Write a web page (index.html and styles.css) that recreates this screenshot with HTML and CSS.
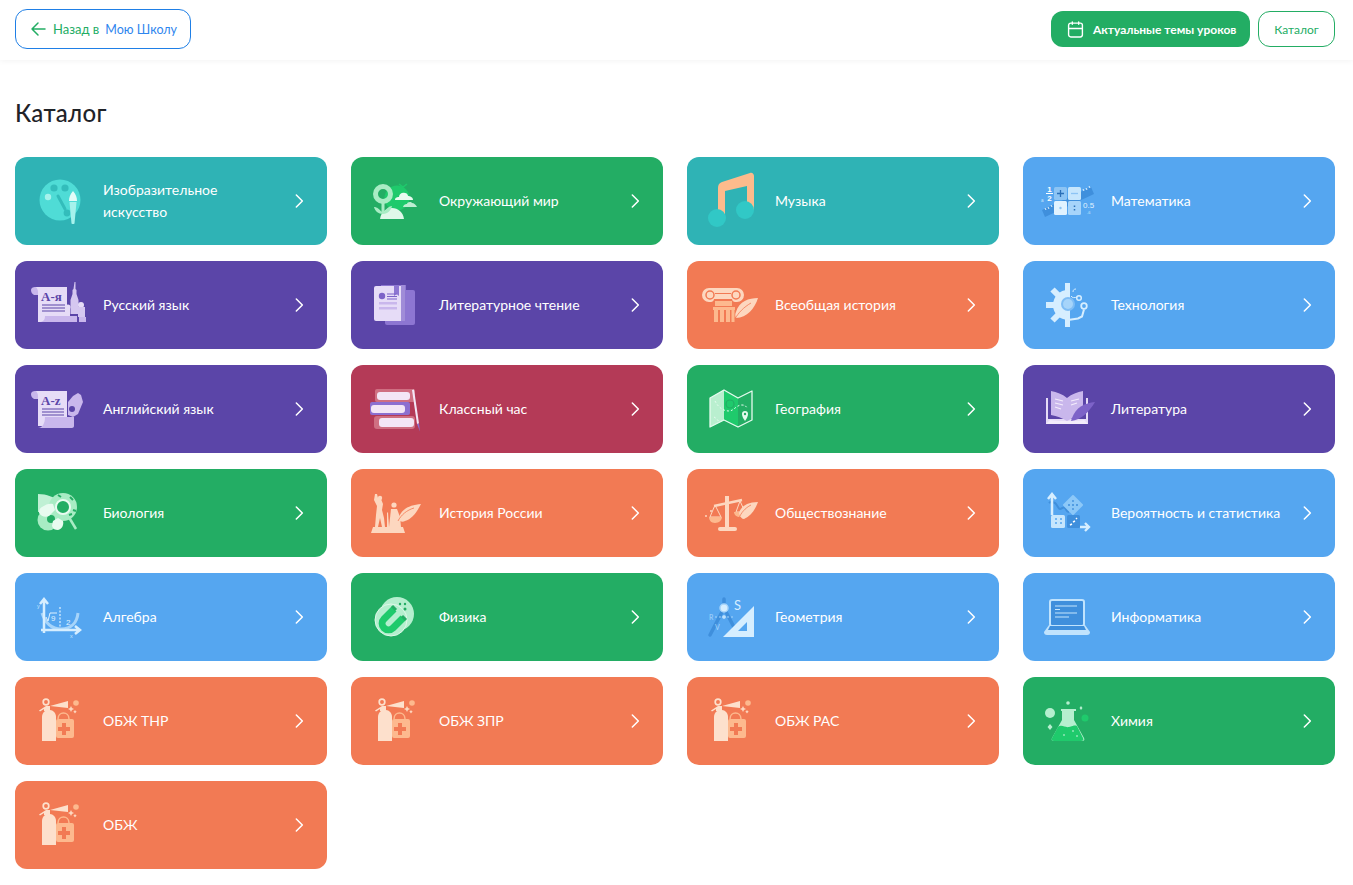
FILE: index.html
```html
<!DOCTYPE html>
<html lang="ru">

<head>
    <meta charset="UTF-8">
    <title>Каталог</title>
    <link rel="stylesheet" href="styles.css">
</head>

<body>
    <!-- иконки предметов, координаты как в карточке (88x88) -->
    <svg class="icon-sprite" xmlns="http://www.w3.org/2000/svg">
        <defs>
            <clipPath id="gear-half"><rect x="20" y="20" width="27" height="50"/></clipPath>
        </defs>
        <symbol id="i-art" viewBox="0 0 88 88">
            <circle cx="45" cy="43" r="20.500" fill="#4fdcd6"/>
            <circle cx="39" cy="31" r="3.600" fill="#33bdbb"/>
            <circle cx="50" cy="31" r="3.600" fill="#33bdbb"/>
            <circle cx="33" cy="40" r="3.200" fill="#a6f2ec"/>
            <circle cx="52" cy="56" r="3.400" fill="#33bdbb"/>
            <path d="M43 39l7 13" stroke="#33bdbb" stroke-width="3" stroke-linecap="round"/>
            <path d="M58 34c-3 3-4 7-4 10h8c0-3-1-7-4-10z" fill="#e2fcf8"/>
            <path d="M54.500 45h7l-2 21.500c-1 .7-2 .7-3 0z" fill="#a6f2ec"/>
        </symbol>
        <symbol id="i-world" viewBox="0 0 88 88">
            <circle cx="46" cy="41" r="12.500" fill="#1fca6c"/>
            <path d="M29 62c1-7 6-11 12-11s11 4 12 11z" fill="#e0f8ea"/>
            <path d="M32 46v10" stroke="#a8ecc4" stroke-width="3"/>
            <path d="M32 56c-4-4-6-6-9-6 1 4 4 7 9 7zM32 56c3-4 6-7 9-7-1 4-4 8-9 8z" fill="#a8ecc4"/>
            <circle cx="32" cy="37" r="7.500" fill="none" stroke="#a8ecc4" stroke-width="5"/>
            <path d="M44 43c0-3 3-3 4-3 0-3 3-5 6-4 2 0 3 2 3 3 2 0 5 1 5 4z" fill="#e8fbf0"/>
            <path d="M52 50c1-3 3-3 4-3 0-2 4-3 5-1 2 0 4 2 5 4z" fill="#bdeed2"/>
            <path d="M48 27l4 3 4-3M44 47l3 2 3-2" fill="none" stroke="#1fca6c" stroke-width="1.500"/>
        </symbol>
        <symbol id="i-music" viewBox="0 0 88 88">
            <path d="M31 60V31c0-3 1-5 4-6l28-9c2-1 4 1 4 3v34h-7V29l-22 5v26z" fill="#fdbb8c"/>
            <circle cx="30" cy="61" r="9" fill="#31c8c6"/>
            <circle cx="58" cy="53" r="9" fill="#31c8c6"/>
        </symbol>
        <symbol id="i-lit-read" viewBox="0 0 88 88">
            <rect x="34" y="29" width="30" height="35" rx="2" fill="#8d76d2"/>
            <path d="M38 29h17v-5H30v6z" fill="#8d76d2"/>
            <rect x="23" y="25" width="31" height="35" rx="2" fill="#e6dcf7"/>
            <rect x="50" y="24" width="4" height="36" fill="#a08cd8"/>
            <path d="M43 25h5v10l-2.500-2-2.500 2z" fill="#8d76d2"/>
            <circle cx="31" cy="35" r="3.200" fill="#7d63c8"/>
            <path d="M36 33h10M36 35.500h10M36 38h10" stroke="#7d63c8"/>
            <rect x="28" y="41" width="18" height="2.500" fill="#c9b7ec"/>
            <rect x="28" y="46" width="18" height="2.500" fill="#c9b7ec"/>
        </symbol>
        <symbol id="i-column" viewBox="0 0 88 88">
            <path d="M22 27h28a7 7 0 0 1 0 14h-2c-1 0-3-1-3-3H27c0 2-2 3-3 3h-2a7 7 0 0 1 0-14z" fill="#fdd7bf"/>
            <circle cx="23" cy="34" r="4" fill="none" stroke="#f27a54" stroke-width="1.500"/>
            <circle cx="49" cy="34" r="4" fill="none" stroke="#f27a54" stroke-width="1.500"/>
            <path d="M28 32.500h16" stroke="#f27a54"/>
            <rect x="28" y="40" width="17" height="5" fill="#fdb98e"/>
            <rect x="26" y="46" width="22" height="3" fill="#fdb98e"/>
            <path d="M27 49h4v12h-4zM33 49h4v12h-4zM39 49h4v12h-4zM44.500 49h3v12h-3z" fill="#fdb98e"/>
            <path d="M71 37c-9 0-19 3-22 14-1 2-1 4 0 6 11 0 19-10 22-20z" fill="#fdd7bf"/>
            <path d="M48 58c3-6 9-12 16-16" fill="none" stroke="#f27a54" stroke-width=".8"/>
        </symbol>
        <symbol id="i-tech" viewBox="0 0 88 88">
            <g clip-path="url(#gear-half)">
                <circle cx="45" cy="44" r="15" fill="#d6eeff"/>
                <path d="M45 22v44M23 44h44M29.500 28.500l31 31M29.500 59.500l31-31" stroke="#d6eeff" stroke-width="6"/>
            </g>
            <circle cx="45" cy="43" r="7" fill="#7fbdf5"/>
            <circle cx="45" cy="43" r="5" fill="#a6d4fa"/>
            <path d="M45 59l10-1.500 4-2 2-7" fill="none" stroke="#d6eeff" stroke-width="2"/>
            <circle cx="61" cy="45" r="2.800" fill="none" stroke="#d6eeff" stroke-width="1.800"/>
            <circle cx="56" cy="37" r="2.300" fill="none" stroke="#d6eeff" stroke-width="1.500"/>
            <path d="M48 35c1 2 4 2 6 1M50 31c0-2 1-3 3-3" fill="none" stroke="#d6eeff"/>
        </symbol>
        <symbol id="i-books" viewBox="0 0 88 88">
            <rect x="24" y="24" width="40" height="13" rx="2" fill="#cf6f82"/>
            <rect x="26" y="27" width="33" height="8" rx="3" fill="#f3e6f6"/>
            <rect x="19" y="37" width="40" height="13" rx="2" fill="#8c6fd0"/>
            <rect x="20" y="40" width="34" height="8" rx="3" fill="#f3e6f6"/>
            <rect x="23" y="51" width="41" height="13" rx="3" fill="#cf6f82"/>
            <rect x="28" y="53" width="35" height="9" rx="3" fill="#f3e6f6"/>
            <path d="M61 25l2-.5 5 34-2 .5z" fill="#f3e6f6"/>
            <path d="M66 59l2-.5 1 8z" fill="#8c6fd0"/>
        </symbol>
        <symbol id="i-map" viewBox="0 0 88 88">
            <path d="M23 33l14-8v30l-14 7z" fill="#b9efcf"/>
            <path d="M37 25l14 8v29l-14-7z" fill="#1fca6c"/>
            <path d="M23 33l14-8 14 8 14-7v29l-14 7-14-7-14 7z" fill="none" stroke="#e6fbef" stroke-width="1.300" stroke-linejoin="round"/>
            <circle cx="43" cy="39" r="4" fill="none" stroke="#23ad64" stroke-width="1.200"/>
            <path d="M28 36c3 6 8 10 14 10 5 0 7-6 13-6 3 0 4 1 5 3M27 52c2 1 4 3 5 5" fill="none" stroke="#e6fbef" stroke-dasharray="2 2"/>
            <path d="M58 56c-2-3-3-5-3-7a3 3 0 0 1 6 0c0 2-1 4-3 7z" fill="#e6fbef"/>
            <circle cx="58" cy="49" r="1.200" fill="#23ad64"/>
        </symbol>
        <symbol id="i-lit" viewBox="0 0 88 88">
            <path d="M23 33h42v26H23z" fill="#e6dcf7"/>
            <path d="M25 33h38v21H25z" fill="#5b45a8"/>
            <path d="M28 26c6 1 11 3 16 7v23c-5-3-10-5-16-6z" fill="#c9b7ec"/>
            <path d="M60 26c-6 1-11 3-16 7v23c5-3 10-5 16-6z" fill="#c9b7ec"/>
            <path d="M44 56c-5 0-13 0-17-1l-4 4h42l-4-4c-4 1-12 1-17 1z" fill="#f3ecfb"/>
            <path d="M32 34l8 2M32 38l8 2M32 42l6 2M48 36l8-2M48 40l6-2" stroke="#f3ecfb" stroke-width="1.200"/>
            <path d="M72 37c-10 1-19 5-23 16l-1 3c10-1 18-9 24-19z" fill="#7d63c8"/>
        </symbol>
        <symbol id="i-bio" viewBox="0 0 88 88">
            <path d="M23 25c9 0 16 3 22 8l-8 9-14 1z" fill="#bff0d4"/>
            <circle cx="48" cy="38" r="14" fill="#a8ecc4"/>
            <circle cx="33" cy="51" r="10.500" fill="#a8ecc4"/>
            <circle cx="36" cy="50" r="4" fill="#23ad64"/>
            <path d="M27 38c4-3 8-4 11-3l2 6-6 6c-4 2-8 0-10-3 0-3 1-5 3-6z" fill="#e8fbf0"/>
            <path d="M38 52l5-3 5 3c1 4-1 8-5 9-3 0-5-1-6-4z" fill="#e8fbf0"/>
            <path d="M52 45l9 15" stroke="#a8ecc4" stroke-width="2.500"/>
            <circle cx="48" cy="38" r="7" fill="#23ad64" stroke="#e8fbf0" stroke-width="2"/>
            <path d="M43 26l3 2M55 28l3 3M58 41l3 1M54 46l3-1" stroke="#23ad64" stroke-width="2"/>
        </symbol>
        <symbol id="i-rus-hist" viewBox="0 0 88 88">
            <path d="M22 58h30l2 6H20z" fill="#fdd7bf"/>
            <path d="M24 25h2l1 4 3 1 2 5-1 6 2 8 1 9h-3l-2-9-2 9h-3l1-12 1-9-3-6z" fill="#fdd7bf"/>
            <circle cx="29" cy="29" r="2.200" fill="#fdd7bf"/>
            <path d="M36 44l1-1 1 15h-2z" fill="#fdd7bf"/>
            <circle cx="43" cy="36" r="2.600" fill="#fdd7bf"/>
            <path d="M40 40h6l3 8 1 10H38l1-9z" fill="#fdd7bf"/>
            <path d="M70 35c-10 1-19 4-22 13l-1 3c3 2 5 2 7 1 7-2 12-9 16-17z" fill="#fdd7bf"/>
            <path d="M47 52c3-6 9-11 16-13" fill="none" stroke="#f27a54" stroke-width=".8"/>
        </symbol>
        <symbol id="i-scales" viewBox="0 0 88 88">
            <rect x="38" y="27" width="4" height="31" fill="#fdd7bf"/>
            <rect x="31" y="58" width="19" height="4" rx="2" fill="#fdd7bf"/>
            <path d="M27 37l28-6" stroke="#fdd7bf" stroke-width="2.500"/>
            <path d="M28 36l-5 12h11zM53 32l-4 11h9z" fill="none" stroke="#fdd7bf"/>
            <path d="M22 48h13c0 3-3 6-7 6s-6-3-6-6zM47 43h11c0 3-2 5-5 5s-6-2-6-5z" fill="#fdb98e"/>
            <path d="M71 33c-10 0-17 4-19 11 1 4 3 6 5 6 7-3 11-9 14-17z" fill="#fdd7bf"/>
            <path d="M52 49c2-5 6-10 12-13" fill="none" stroke="#f27a54" stroke-width=".8"/>
            <circle cx="19" cy="47" r="1" fill="#fdd7bf"/>
            <circle cx="24" cy="42" r="1" fill="#fdd7bf"/>
        </symbol>
        <symbol id="i-prob" viewBox="0 0 88 88">
            <path d="M26 34c2-2 4-1 6 0s3 6 5 6 3-3 5-1 1 4 4 4" fill="none" stroke="#3f8fdc" stroke-width="2"/>
            <path d="M29 46V27M25 30l4-5 4 5" fill="none" stroke="#d6eeff" stroke-width="2.500"/>
            <path d="M57 58h9M62 54l4 4-4 4" fill="none" stroke="#d6eeff" stroke-width="2.300"/>
            <rect x="28" y="46" width="14" height="13" rx="1.500" fill="#c6e6fd"/>
            <rect x="44" y="46" width="13" height="13" rx="1.500" fill="#3f8fdc"/>
            <path d="M50 27l9 9-9 9-9-9z" fill="#8cc8f8" stroke="#8cc8f8" stroke-width="2" stroke-linejoin="round"/>
            <path d="M50 31v2M50 39v2M45 36h2M53 36h2M49 36h2" stroke="#3f8fdc" stroke-width="1.300"/>
            <path d="M32 50h2M37 50h2M32 54h2M37 54h2" stroke="#55a6f0" stroke-width="1.500"/>
            <path d="M47 56l2-1M50 53l2-1M53 50l1-1" stroke="#fff" stroke-width="1.500"/>
        </symbol>
        <symbol id="i-phys" viewBox="0 0 88 88">
            <circle cx="46" cy="41" r="17" fill="#b5efcf"/>
            <circle cx="40" cy="47" r="16" fill="#b5efcf" stroke="#e0f8ea"/>
            <path d="M43 36L33 46a6 6 0 0 0 9 9l10-10" fill="none" stroke="#1fca6c" stroke-width="7"/>
            <path d="M41 33l4 4M51 43l4 4" stroke="#23ad64" stroke-width="3"/>
            <circle cx="49" cy="31" r="1.200" fill="#23ad64"/>
            <circle cx="54" cy="31" r="1.200" fill="#23ad64"/>
            <circle cx="54" cy="36" r="1.500" fill="#23ad64"/>
        </symbol>
        <symbol id="i-info" viewBox="0 0 88 88">
            <rect x="27" y="27" width="34" height="26" rx="2" fill="#3f8fdc" stroke="#c0e3fd" stroke-width="2"/>
            <path d="M32 33h22M32 36.500h5M32 40h22M32 44h14" stroke="#c6e6fd"/>
            <path d="M26 52h36l5 7c0 2-1 3-3 3H24c-2 0-3-1-3-3z" fill="#c0e3fd"/>
            <path d="M27 53h34l2 4H25z" fill="#3f8fdc"/>
        </symbol>
        <symbol id="i-safe" viewBox="0 0 88 88">
            <circle cx="61" cy="26" r="2.800" fill="#fdb98e"/>
            <path d="M56 29l1 2 2 1-2 1-1 2-1-2-2-1 2-1zM60 33l.7 1 1 .7-1 .7-.7 1-.7-1-1-.7 1-.7z" fill="#fdd7bf"/>
            <rect x="41" y="42" width="18" height="19" rx="2" fill="#fdb98e"/>
            <path d="M43 42c0-8 11-8 11 0" fill="none" stroke="#fdb98e" stroke-width="1.500"/>
            <path d="M47 46h4v4h4v4h-4v4h-4v-4h-4v-4h4z" fill="#f27a54"/>
            <path d="M27 64V40c0-4 3-7 6-7h2c3 0 6 3 6 7v24z" fill="#fde0cc"/>
            <circle cx="31" cy="25" r="2.800" fill="none" stroke="#fde0cc" stroke-width="1.700"/>
            <path d="M24 33.500l7-4.500h4l18-5v7l-18-2v5h-6v-2l-4 2.500z" fill="#fde0cc"/>
        </symbol>
        <symbol id="i-chem" viewBox="0 0 88 88">
            <circle cx="27" cy="36" r="5" fill="#b5efcf"/>
            <circle cx="62" cy="41" r="3.500" fill="#1fca6c"/>
            <circle cx="45" cy="26" r="1.800" fill="#b5efcf"/>
            <path d="M58 29l1.500 2-1.500 2-1.500-2zM27 47l2.500 3-2.500 3-2.500-3z" fill="#b5efcf"/>
            <path d="M38 32h15v2h-2v9l10 18c1 2 0 3-2 3H31c-2 0-3-1-2-3l10-18v-9h-1z" fill="#b5efcf"/>
            <path d="M35 50c4-3 7 1 11 0s6-2 8-1l6 12c1 2 0 3-2 3H31c-2 0-3-1-2-3z" fill="#1fca6c"/>
            <circle cx="50" cy="54" r=".8" fill="#e0f8ea"/>
            <circle cx="41" cy="58" r=".8" fill="#e0f8ea"/>
            <circle cx="54" cy="59" r=".8" fill="#e0f8ea"/>
        </symbol>
        <symbol id="i-arrow" viewBox="0 0 24 24">
            <path d="M8 3l9 9-9 9" fill="none" stroke="#fff" stroke-width="2.300" stroke-linecap="round" stroke-linejoin="round"/>
        </symbol>
    </svg>

    <header class="topbar">
        <a class="btn-back" href="#">
            <svg class="ico-back" viewBox="0 0 16 16"><path d="M15 8H2M8 2L2 8l6 6" fill="none" stroke="#23ad64" stroke-width="1.500" stroke-linecap="round" stroke-linejoin="round"/></svg>
            <span class="back-green">Назад в</span>
            <span class="back-blue">Мою Школу</span>
        </a>
        <div class="topbar-right">
            <a class="btn-topics" href="#">
                <svg class="ico-cal" viewBox="0 0 16 16"><path d="M3.500 2h9A2 2 0 0 1 14.500 4v9a2 2 0 0 1-2 2h-9a2 2 0 0 1-2-2V4a2 2 0 0 1 2-2zM1.500 7h13M5 1v2M11 1v2" fill="none" stroke="#fff" stroke-width="1.300" stroke-linecap="round"/></svg>
                Актуальные темы уроков
            </a>
            <a class="btn-catalog" href="#">Каталог</a>
        </div>
    </header>

    <main class="content">
        <h1>Каталог</h1>
        <div class="grid">
            <a class="card teal" href="#"><svg class="ico"><use href="#i-art"/></svg><span class="name">Изобразительное искусство</span><svg class="arrow"><use href="#i-arrow"/></svg></a>
            <a class="card green" href="#"><svg class="ico"><use href="#i-world"/></svg><span class="name">Окружающий мир</span><svg class="arrow"><use href="#i-arrow"/></svg></a>
            <a class="card teal" href="#"><svg class="ico"><use href="#i-music"/></svg><span class="name">Музыка</span><svg class="arrow"><use href="#i-arrow"/></svg></a>
            <a class="card blue" href="#">
                <svg class="ico" viewBox="0 0 88 88">
                    <path d="M19 53l49-23 3 7-49 23z" fill="#3f8fdc"/>
                    <path d="M22 51l1 2M25 50l1 2M28 48l1 2M60 32l1 2M63 31l1 2M66 29l1 2" stroke="#e0f2ff"/>
                    <rect x="31" y="30" width="13" height="13" rx="1.500" fill="#8cc4f4"/>
                    <rect x="45" y="30" width="13" height="13" rx="1.500" fill="#c6e6fd"/>
                    <rect x="31" y="44" width="13" height="14" rx="1.500" fill="#e0f2ff"/>
                    <rect x="45" y="44" width="13" height="14" rx="1.500" fill="#a6d4fa"/>
                    <path d="M34 36.500h7M37.500 33v7" stroke="#2a6fb8" stroke-width="1.300"/>
                    <path d="M48 36.500h7" stroke="#8cc4f4" stroke-width="1.300"/>
                    <circle cx="37.500" cy="51" r="1.200" fill="#8cc4f4"/>
                    <path d="M51.500 48.500v1.500M51.500 52v1.500" stroke="#2a6fb8" stroke-width="1.500"/>
                    <text x="26.500" y="35" class="icon-txt" fill="#fff" font-size="8" font-weight="700" text-anchor="middle">1</text>
                    <path d="M23 36.500h7" stroke="#fff"/>
                    <text x="26.500" y="43.500" class="icon-txt" fill="#fff" font-size="8" font-weight="700" text-anchor="middle">2</text>
                    <text x="60" y="51" class="icon-txt" fill="#e0f2ff" font-size="8">0.5</text>
                    <text x="18" y="45" class="icon-txt" fill="#c6e6fd" font-size="4.500">a</text>
                    <text x="64" y="57" class="icon-txt" fill="#c6e6fd" font-size="4">-6</text>
                </svg>
                <span class="name">Математика</span><svg class="arrow"><use href="#i-arrow"/></svg>
            </a>

            <a class="card purple" href="#">
                <svg class="ico" viewBox="0 0 88 88">
                    <path d="M16 29c0-2 2-3 4-3h4v8h-5c-2-1-3-3-3-5z" fill="#c9b7ec"/>
                    <path d="M21 26h31v29H30v6h-7V31c0-2-1-4-2-5z" fill="#e6dcf7"/>
                    <path d="M30 55h32v6H23c3 0 7 0 7-6z" fill="#c9b7ec"/>
                    <text x="26" y="40" class="icon-serif" fill="#5b45a8" font-size="13" font-weight="700">А-я</text>
                    <path d="M27 44h23M27 47h23M27 50h23" stroke="#5b45a8" stroke-width="1.200"/>
                    <path d="M59.500 21h1v7l1 1v4l2 6v14h-8V39l2-6v-4l1-1z" fill="#d5c7f0"/>
                    <circle cx="53" cy="46" r="2.500" fill="#e6dcf7"/>
                    <rect x="51" y="47" width="4" height="8" fill="#e6dcf7"/>
                    <circle cx="66" cy="44" r="3" fill="#e6dcf7"/>
                    <rect x="63" y="46" width="7" height="10" fill="#d5c7f0"/>
                    <path d="M64 56h7v5h-7z" fill="#c9b7ec"/>
                </svg>
                <span class="name">Русский язык</span><svg class="arrow"><use href="#i-arrow"/></svg>
            </a>
            <a class="card purple" href="#"><svg class="ico"><use href="#i-lit-read"/></svg><span class="name">Литературное чтение</span><svg class="arrow"><use href="#i-arrow"/></svg></a>
            <a class="card orange" href="#"><svg class="ico"><use href="#i-column"/></svg><span class="name">Всеобщая история</span><svg class="arrow"><use href="#i-arrow"/></svg></a>
            <a class="card blue" href="#"><svg class="ico"><use href="#i-tech"/></svg><span class="name">Технология</span><svg class="arrow"><use href="#i-arrow"/></svg></a>

            <a class="card purple" href="#">
                <svg class="ico" viewBox="0 0 88 88">
                    <path d="M16 29c0-2 2-3 4-3h4v8h-5c-2-1-3-3-3-5z" fill="#c9b7ec"/>
                    <path d="M21 26h31v26H30v9h-7V31c0-2-1-4-2-5z" fill="#e6dcf7"/>
                    <path d="M30 52h29v9c0 1-1 2-2 2H23c4 0 7-4 7-11z" fill="#c9b7ec"/>
                    <text x="26" y="40" class="icon-serif" fill="#5b45a8" font-size="13" font-weight="700">A-z</text>
                    <path d="M27 44h22M27 47h22M27 50h22" stroke="#5b45a8" stroke-width="1.200"/>
                    <path d="M53 37l5-6 5-3 3 2 2 7-5 12-5 3-5-2z" fill="#c9b7ec"/>
                    <circle cx="57" cy="44" r="3" fill="#5b45a8"/>
                </svg>
                <span class="name">Английский язык</span><svg class="arrow"><use href="#i-arrow"/></svg>
            </a>
            <a class="card crimson" href="#"><svg class="ico"><use href="#i-books"/></svg><span class="name">Классный час</span><svg class="arrow"><use href="#i-arrow"/></svg></a>
            <a class="card green" href="#"><svg class="ico"><use href="#i-map"/></svg><span class="name">География</span><svg class="arrow"><use href="#i-arrow"/></svg></a>
            <a class="card purple" href="#"><svg class="ico"><use href="#i-lit"/></svg><span class="name">Литература</span><svg class="arrow"><use href="#i-arrow"/></svg></a>

            <a class="card green" href="#"><svg class="ico"><use href="#i-bio"/></svg><span class="name">Биология</span><svg class="arrow"><use href="#i-arrow"/></svg></a>
            <a class="card orange" href="#"><svg class="ico"><use href="#i-rus-hist"/></svg><span class="name">История России</span><svg class="arrow"><use href="#i-arrow"/></svg></a>
            <a class="card orange" href="#"><svg class="ico"><use href="#i-scales"/></svg><span class="name">Обществознание</span><svg class="arrow"><use href="#i-arrow"/></svg></a>
            <a class="card blue" href="#"><svg class="ico"><use href="#i-prob"/></svg><span class="name">Вероятность и статистика</span><svg class="arrow"><use href="#i-arrow"/></svg></a>

            <a class="card blue" href="#">
                <svg class="ico" viewBox="0 0 88 88">
                    <path d="M27 40c3 9 8 16 19 16 10 0 16-6 17-16" fill="none" stroke="#a6d4fa" stroke-width="3"/>
                    <path d="M45 34v20" stroke="#e0f2ff" stroke-width="1.200" stroke-dasharray="2 1.500"/>
                    <path d="M29 60V26M25 31l4-5 4 5M26 57h38M60 53l5 4-5 4" fill="none" stroke="#d6eeff" stroke-width="2.500"/>
                    <path d="M31 44l2 4 2-8h7" fill="none" stroke="#e0f2ff"/>
                    <text x="36" y="47.500" class="icon-txt" fill="#e0f2ff" font-size="8">9</text>
                    <text x="51" y="52" class="icon-txt" fill="#e0f2ff" font-size="8">2</text>
                    <text x="22" y="35" class="icon-txt" fill="#c6e6fd" font-size="5.500">y</text>
                    <text x="55" y="65" class="icon-txt" fill="#c6e6fd" font-size="5.500">x</text>
                </svg>
                <span class="name">Алгебра</span><svg class="arrow"><use href="#i-arrow"/></svg>
            </a>
            <a class="card green" href="#"><svg class="ico"><use href="#i-phys"/></svg><span class="name">Физика</span><svg class="arrow"><use href="#i-arrow"/></svg></a>
            <a class="card blue" href="#">
                <svg class="ico" viewBox="0 0 88 88">
                    <path d="M37 26v9L23 62M37 35l14 27" fill="none" stroke="#3f8fdc" stroke-width="3.500" stroke-linecap="round"/>
                    <circle cx="37" cy="35" r="4" fill="#d6eeff" stroke="#a6d4fa" stroke-width="1.500"/>
                    <circle cx="37" cy="44" r="1.800" fill="#d6eeff"/>
                    <path d="M28 44h18" stroke="#a6d4fa" stroke-dasharray="2 2"/>
                    <path d="M67 33v31H36z" fill="#d6eeff"/>
                    <path d="M60 49v9H51z" fill="#55a6f0"/>
                    <text x="47" y="37" class="icon-sans" fill="#d6eeff" font-size="13">S</text>
                    <text x="22" y="47" class="icon-sans" fill="#a6d4fa" font-size="7">R</text>
                    <text x="28" y="57" class="icon-sans" fill="#a6d4fa" font-size="7">V</text>
                </svg>
                <span class="name">Геометрия</span><svg class="arrow"><use href="#i-arrow"/></svg>
            </a>
            <a class="card blue" href="#"><svg class="ico"><use href="#i-info"/></svg><span class="name">Информатика</span><svg class="arrow"><use href="#i-arrow"/></svg></a>

            <a class="card orange" href="#"><svg class="ico"><use href="#i-safe"/></svg><span class="name">ОБЖ ТНР</span><svg class="arrow"><use href="#i-arrow"/></svg></a>
            <a class="card orange" href="#"><svg class="ico"><use href="#i-safe"/></svg><span class="name">ОБЖ ЗПР</span><svg class="arrow"><use href="#i-arrow"/></svg></a>
            <a class="card orange" href="#"><svg class="ico"><use href="#i-safe"/></svg><span class="name">ОБЖ РАС</span><svg class="arrow"><use href="#i-arrow"/></svg></a>
            <a class="card green" href="#"><svg class="ico"><use href="#i-chem"/></svg><span class="name">Химия</span><svg class="arrow"><use href="#i-arrow"/></svg></a>

            <a class="card orange" href="#"><svg class="ico"><use href="#i-safe"/></svg><span class="name">ОБЖ</span><svg class="arrow"><use href="#i-arrow"/></svg></a>
        </div>
    </main>
</body>

</html>
```

FILE: styles.css
```css
body {
    margin: 0;
    background: #fff;
    color: #1f2328;
    font-family: 'Lato', 'Open Sans', sans-serif;
}

a {
    text-decoration: none;
}

.icon-sprite {
    position: absolute;
    width: 0;
    height: 0;
}

.icon-txt {
    font-family: 'Liberation Sans', sans-serif;
}

.icon-sans {
    font-family: 'Lato', sans-serif;
}

.icon-serif {
    font-family: 'Liberation Serif', serif;
}

.topbar {
    height: 60px;
    box-sizing: border-box;
    padding: 0 18px 2px 15px;
    display: flex;
    align-items: center;
    justify-content: space-between;
    box-shadow: 0 1px 6px rgba(0, 0, 0, 0.05);
}

.btn-back {
    width: 176px;
    height: 40px;
    box-sizing: border-box;
    border: 1px solid #1f7fe6;
    border-radius: 12px;
    display: flex;
    align-items: center;
    padding-left: 14px;
    font-size: 13px;
}

.ico-back {
    width: 16px;
    height: 16px;
    margin-right: 7px;
}

.back-green {
    color: #23ad64;
    margin-right: 6px;
}

.back-blue {
    color: #2f86ee;
    font-size: 12.5px;
}

.topbar-right {
    display: flex;
    gap: 8px;
}

.btn-topics {
    width: 199px;
    height: 36px;
    box-sizing: border-box;
    background: #23ad64;
    border-radius: 12px;
    color: #fff;
    font-size: 12px;
    font-weight: 700;
    display: flex;
    align-items: center;
    padding-left: 16px;
}

.ico-cal {
    width: 17px;
    height: 17px;
    margin-right: 9px;
}

.btn-catalog {
    width: 77px;
    height: 36px;
    box-sizing: border-box;
    border: 1px solid #23ad64;
    border-radius: 12px;
    color: #23ad64;
    font-size: 12px;
    display: flex;
    align-items: center;
    justify-content: center;
}

.content {
    padding: 0 18px 16px 15px;
}

h1 {
    margin: 0;
    padding-top: 37px;
    height: 60px;
    font-size: 24px;
    line-height: 32px;
    font-weight: 500;
    letter-spacing: 0.3px;
}

.grid {
    display: grid;
    grid-template-columns: repeat(4, 312px);
    column-gap: 24px;
    row-gap: 16px;
}

.card {
    height: 88px;
    border-radius: 12px;
    display: flex;
    align-items: center;
    padding-right: 20px;
    color: #fff;
    font-size: 14px;
    line-height: 22px;
}

.ico {
    width: 88px;
    height: 88px;
    flex: none;
}

.name {
    flex: 1;
    padding-right: 12px;
}

.arrow {
    width: 16px;
    height: 16px;
    flex: none;
}

.teal {
    background-color: #2fb3b5;
}

.green {
    background-color: #23ad64;
}

.blue {
    background-color: #55a6f0;
}

.purple {
    background-color: #5b45a8;
}

.orange {
    background-color: #f27a54;
}

.crimson {
    background-color: #b43a57;
}
```
